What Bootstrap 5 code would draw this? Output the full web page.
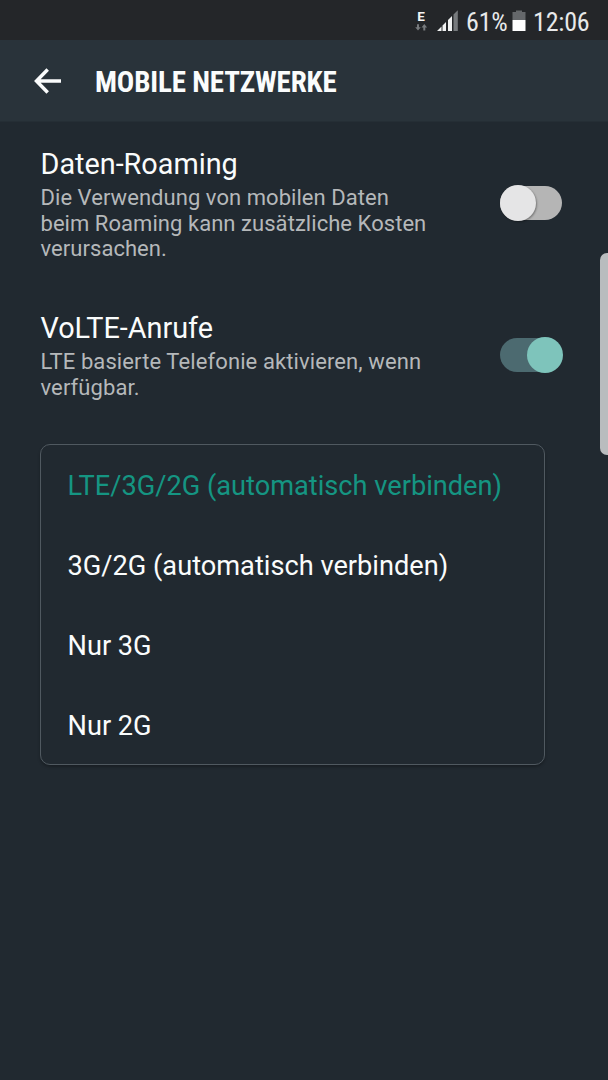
<!DOCTYPE html>
<html lang="de">
<head>
<meta charset="utf-8">
<meta name="viewport" content="width=device-width, initial-scale=1">
<title>Mobile Netzwerke</title>
<link href="https://cdn.jsdelivr.net/npm/bootstrap@5.3.0/dist/css/bootstrap.min.css" rel="stylesheet">
<style>
body{font-family:Roboto,"Liberation Sans",sans-serif;background:#212930;color:#fafcfc;min-height:1080px;overflow:hidden}
.statusbar{height:40px;background:#242629;padding-top:2px}
.condensed{font-family:"Roboto Condensed",Roboto,sans-serif;white-space:nowrap;flex:none}
.clock{font-size:26px;line-height:40px;color:#e8e9ea;letter-spacing:-.2px}
.appbar{height:82px;background:#29333a;border-bottom:1px solid #252e35;padding-left:34px}
.appbar h1{font-size:29px;font-weight:700;line-height:34px;margin:3px 0 0 33px;letter-spacing:-.16px}
.setting{padding:0 45px 0 40.5px}
.setting h2{font-size:28.8px;font-weight:400;line-height:33px;margin:0 0 4px}
.setting p{font-size:22px;line-height:25.7px;color:#b5b8ba;margin:0;white-space:nowrap;letter-spacing:.05px}
.toggle{position:relative;width:63px;height:36px;flex:none}
.toggle::before{content:"";position:absolute;inset:1px 1px 1px 0;border-radius:17px;background:#b5b5b5}
.toggle::after{content:"";position:absolute;left:0;top:0;width:36px;height:36px;border-radius:50%;background:#e5e5e6;box-shadow:1px 1px 2px #0005}
.toggle.on::before{background:#4c6a70}
.toggle.on::after{left:27px;background:#7ec4bb;box-shadow:none}
.choices{width:505px;height:321px;margin-left:40px;border:1px solid #505960;border-radius:10px;box-shadow:0 2px 3px #0004;padding-top:1px}
.choices button{height:80px;font-size:27.2px;background:none;border:0;color:inherit;padding:0 0 0 26.5px;text-align:left;display:block;width:100%;white-space:nowrap}
.choices button.chosen{color:#159582}
.edge{position:absolute;right:0;top:253px;width:8px;height:202px;background:#b9bcbe;border-radius:7px 0 0 7px}
</style>
</head>
<body class="position-relative">
<header class="statusbar d-flex">
  <svg width="46" height="38" viewBox="414 2 46 38" style="margin-left:414px" class="flex-shrink-0" aria-hidden="true">
    <text x="417.300" y="21" font-size="13.500" font-weight="700" fill="#f4f5f5" font-family="Roboto">E</text>
    <path d="M417 24.200h2v3h1.800l-2.800 3.300-2.800-3.300h1.800zM423.300 30.500h2v-3h1.800l-2.800-3.400-2.800 3.400h1.800z" fill="#777a7d"/>
    <path d="M437 31l4.500-4.500v4.500zM442.500 25.500l3.500-3.500V31h-3.500zM448 20l4-4V31H448z" fill="#f0f1f1"/>
    <path d="M453.500 14.500l4.300-4.300V31h-4.300z" fill="#777a7d"/>
  </svg>
  <span class="condensed clock" style="margin-left:6px;width:41px">61%</span>
  <svg width="14" height="38" viewBox="512 2 14 38" style="margin-left:5px" class="flex-shrink-0" aria-hidden="true"><path d="M512.500 12h3.500v-1.500h6V12h3.500v8h-13z" fill="#65686b"/><path d="M512.500 20h13v11h-13z" fill="#fff"/></svg>
  <span class="condensed clock" style="margin-left:7px">12:06</span>
</header>
<nav class="appbar d-flex align-items-center">
  <svg width="28" height="28" viewBox="0 0 28 28" aria-label="Zurück"><path d="M13.700 2.500L2.500 14l11.200 11.500M2.500 14H27" fill="none" stroke="#fafcfc" stroke-width="3.500"/></svg>
  <h1 class="condensed">MOBILE NETZWERKE</h1>
</nav>
<main>
  <section class="setting d-flex justify-content-between" style="margin-top:26px">
    <div><h2>Daten-Roaming</h2><p>Die Verwendung von mobilen Daten<br>beim Roaming kann zusätzliche Kosten<br>verursachen.</p></div>
    <div class="toggle" style="margin-top:37px" role="switch" aria-checked="false"></div>
  </section>
  <section class="setting d-flex justify-content-between" style="margin-top:49.900px">
    <div><h2>VoLTE-Anrufe</h2><p style="letter-spacing:.1px">LTE basierte Telefonie aktivieren, wenn<br>verfügbar.</p></div>
    <div class="toggle on" style="margin-top:25px" role="switch" aria-checked="true"></div>
  </section>
  <div class="choices" style="margin-top:43.500px">
    <button class="chosen">LTE/3G/2G (automatisch verbinden)</button>
    <button>3G/2G (automatisch verbinden)</button>
    <button>Nur 3G</button>
    <button>Nur 2G</button>
  </div>
</main>
<div class="edge"></div>
<script src="https://cdn.jsdelivr.net/npm/bootstrap@5.3.0/dist/js/bootstrap.bundle.min.js"></script>
</body>
</html>
